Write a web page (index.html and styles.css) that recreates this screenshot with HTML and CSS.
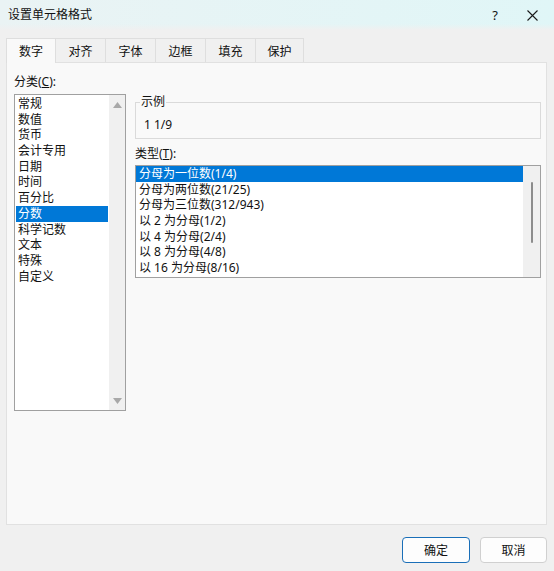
FILE: index.html
```html
<!DOCTYPE html>
<html lang="zh-CN">
<head>
<meta charset="UTF-8">
<meta name="viewport" content="width=device-width,initial-scale=1">
<title>设置单元格格式</title>
<link rel="stylesheet" href="styles.css">
</head>
<body>
<div class="dialog">
  <div class="titlebar">
    <span class="title">设置单元格格式</span>
    <span class="help">?</span>
    <span class="close">
      <svg width="11" height="11" viewBox="0 0 11 11"><path d="M0.5 0.5L10.5 10.5M10.5 0.5L0.5 10.5" stroke="#1a1a1a" stroke-width="1.1" fill="none"/></svg>
    </span>
  </div>
  <div class="tabs">
    <div class="tab active">数字</div>
    <div class="tab">对齐</div>
    <div class="tab">字体</div>
    <div class="tab">边框</div>
    <div class="tab">填充</div>
    <div class="tab last">保护</div>
  </div>
  <div class="panel">
    <div class="col-left">
      <div class="label">分类(<u>C</u>):</div>
      <div class="listbox cat">
        <ul class="items">
          <li>常规</li>
          <li>数值</li>
          <li>货币</li>
          <li>会计专用</li>
          <li>日期</li>
          <li>时间</li>
          <li>百分比</li>
          <li class="sel">分数</li>
          <li>科学记数</li>
          <li>文本</li>
          <li>特殊</li>
          <li>自定义</li>
        </ul>
        <div class="vscroll arrows">
          <svg width="9" height="6" viewBox="0 0 9 6"><path d="M0 6L4.5 0L9 6Z" fill="#a8a8a8"/></svg>
          <svg width="9" height="6" viewBox="0 0 9 6"><path d="M0 0L4.5 6L9 0Z" fill="#a8a8a8"/></svg>
        </div>
      </div>
    </div>
    <div class="col-right">
      <fieldset class="sample">
        <legend>示例</legend>
        <div class="sample-value">1 1/9</div>
      </fieldset>
      <div class="label type-label">类型(<u>T</u>):</div>
      <div class="listbox types">
        <ul class="items">
          <li class="sel">分母为一位数(1/4)</li>
          <li>分母为两位数(21/25)</li>
          <li>分母为三位数(312/943)</li>
          <li>以 2 为分母(1/2)</li>
          <li>以 4 为分母(2/4)</li>
          <li>以 8 为分母(4/8)</li>
          <li>以 16 为分母(8/16)</li>
        </ul>
        <div class="vscroll"><div class="thumb"></div></div>
      </div>
    </div>
  </div>
  <div class="buttons">
    <button class="btn default">确定</button>
    <button class="btn">取消</button>
  </div>
</div>
</body>
</html>
```

FILE: styles.css
```css
body{margin:0;padding:0;background:#f0f0f0;font-family:"Noto Sans","Noto Sans CJK SC",sans-serif;font-size:12px;color:#111;}
ul{list-style:none;margin:0;padding:0;}
.dialog{width:554px;height:571px;display:flex;flex-direction:column;background:#f0f0f0;}

/* title bar */
.titlebar{height:30px;display:flex;align-items:center;padding:0 0 0 8px;background:linear-gradient(to bottom,rgba(240,240,240,0) 80%,#f0f0f0),linear-gradient(to right,#eaf3f4,#e0f6f7);box-sizing:border-box;}
.title{flex:1;line-height:16px;}
.help{width:20px;text-align:center;font-size:13px;margin-right:22px;}
.close{width:12px;display:flex;margin-right:15px;}

/* tabs */
.tabs{display:flex;margin:8px 0 0 6px;height:24px;}
.tab{width:50px;box-sizing:border-box;height:24px;display:flex;align-items:center;justify-content:center;border:1px solid #dedede;border-left:none;border-bottom:none;background:#f0f0f0;}
.tab.last{width:48px;}
.tab.active{border-left:1px solid #dedede;background:#f9f9f9;height:25px;position:relative;z-index:1;}

/* tab page */
.panel{height:463px;box-sizing:border-box;margin:0 7px 0 6px;border:1px solid #e1e1e1;background:#f9f9f9;display:grid;grid-template-columns:112px 406px;column-gap:9px;padding:11px 5px 0 7px;align-content:start;}
.label{line-height:16px;margin-bottom:4px;}
.listbox{display:flex;background:#fff;border:1px solid #a0a0a0;box-sizing:border-box;}
.items{flex:1;min-width:0;}
.items li{line-height:15.7px;height:15.7px;padding-left:3px;white-space:nowrap;}
.items li.sel{background:#0078d7;color:#fff;}
.vscroll{background:#f0f0f0;}

.cat{height:317px;}
.cat .items{padding:1px 1px 0 1px;}
.cat .items li{padding-left:2px;}
.cat .vscroll{width:16px;}
.arrows{display:flex;flex-direction:column;justify-content:space-between;align-items:center;padding:7px 0 6px;}

.col-right{padding-top:20px;}
.sample{margin:0;padding:7px 0 5px 8px;border:1px solid #dadada;min-width:0;}
.sample legend{padding:0 1px;margin-left:-4px;line-height:16px;}
.sample-value{line-height:16px;}
.type-label{margin:7px 0 3px;}

.types{height:113px;}
.types .items li{padding-left:3px;}
.types .vscroll{width:17px;padding:16px 0 0 8px;box-sizing:border-box;}
.thumb{width:2px;height:61px;background:#8c8c8c;border-radius:1px;}

/* footer buttons */
.buttons{display:flex;justify-content:flex-end;gap:10px;padding:12px 7px 0 0;}
.btn{width:67px;height:26px;box-sizing:border-box;border:1px solid #d0d0d0;border-radius:4px;background:#fdfdfd;font:inherit;color:#111;padding:0;}
.btn.default{width:68px;border:1px solid #1a6fb8;box-shadow:inset 0 0 0 1px #fdfdfd;}
```
